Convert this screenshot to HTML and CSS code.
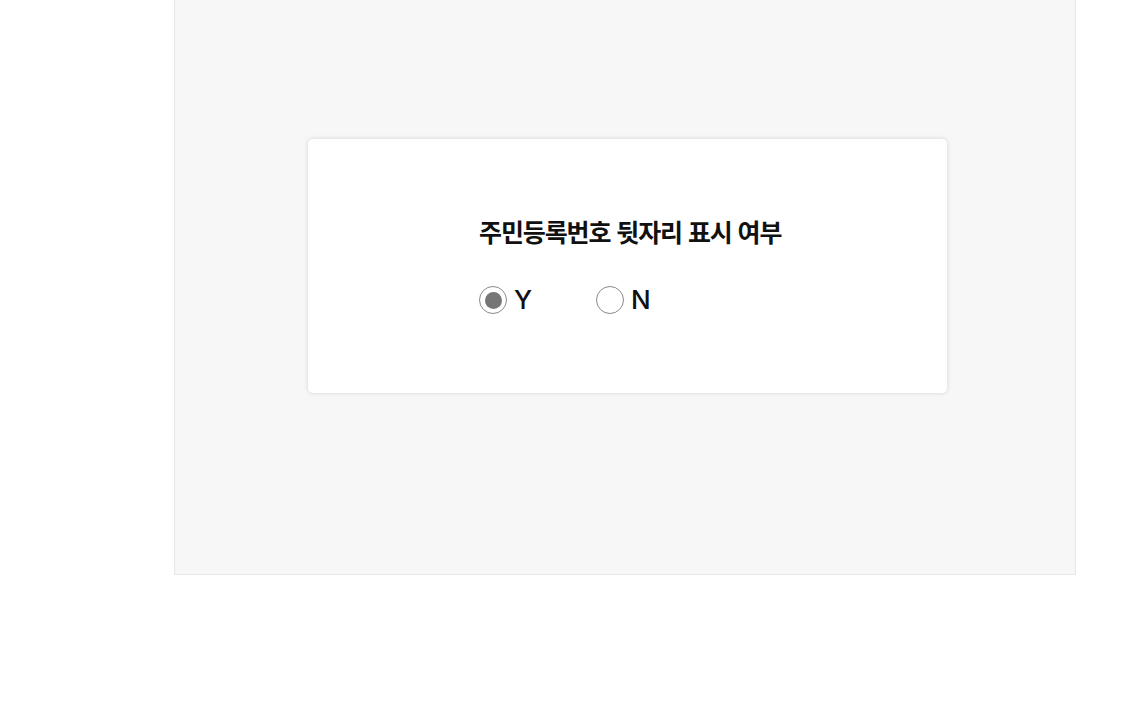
FILE: index.html
```html
<!DOCTYPE html>
<html lang="ko">
<head>
<meta charset="utf-8">
<link rel="stylesheet" href="styles.css">
</head>
<body>
<div class="panel">
  <div class="card">
    <div class="content">
      <h2 class="title">주민등록번호 뒷자리 표시 여부</h2>
      <div class="options">
        <label class="option">
          <span class="radio checked"></span>
          <span class="label">Y</span>
        </label>
        <label class="option">
          <span class="radio"></span>
          <span class="label">N</span>
        </label>
      </div>
    </div>
  </div>
</div>
</body>
</html>
```
FILE: styles.css
```css
html, body {
  margin: 0;
  padding: 0;
  background: #ffffff;
}
body {
  font-family: Inter, "Noto Sans CJK KR", sans-serif;
  color: #111111;
}
.panel {
  box-sizing: border-box;
  margin-left: 174px;
  width: 902px;
  height: 575px;
  background: #f7f7f7;
  border: 1px solid #e6e6e6;
  border-top: none;
  padding-top: 139px;
  padding-left: 133px;
}
.card {
  box-sizing: border-box;
  width: 639px;
  height: 254px;
  background: #ffffff;
  border-radius: 5px;
  box-shadow: 0 0 5px rgba(0, 0, 0, 0.14);
  padding-top: 76px;
  padding-left: 171px;
}
.title {
  margin: 0;
  font-family: "Noto Sans CJK KR", sans-serif;
  font-size: 25px;
  font-weight: 700;
  line-height: 32px;
  letter-spacing: -1.1px;
  color: #111111;
}
.options {
  display: flex;
  margin-top: 39px;
}
.option {
  display: flex;
  align-items: center;
  width: 117px;
}
.radio {
  box-sizing: border-box;
  width: 28px;
  height: 28px;
  border: 1px solid #8a8a8a;
  border-radius: 50%;
  display: flex;
  align-items: center;
  justify-content: center;
  background: #ffffff;
}
.radio.checked::after {
  content: "";
  width: 17px;
  height: 17px;
  border-radius: 50%;
  background: #767676;
}
.label {
  margin-left: 7px;
  font-size: 26px;
  font-weight: 500;
  line-height: 28px;
  color: #111111;
}
```
